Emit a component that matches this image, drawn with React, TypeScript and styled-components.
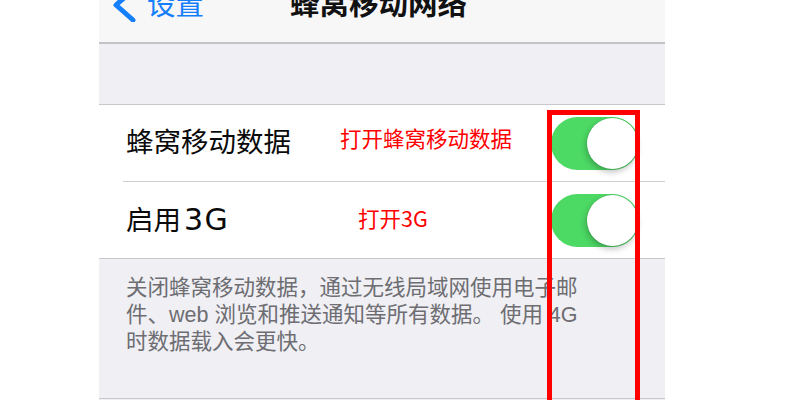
import React from 'react'
import styled, { createGlobalStyle } from 'styled-components'

const GlobalStyle = createGlobalStyle`
  html, body {
    margin: 0;
    padding: 0;
    background: #ffffff;
    overflow: hidden;
  }
  body {
    font-family: "Liberation Sans", "Noto Sans CJK SC", sans-serif;
  }
`

export default function App() {
  return (
    <>
      <GlobalStyle />
      <Page>
        <Screen>
          <NavBar>
            <BackButton>
              <Chevron viewBox="0 0 26 34">
                <path d="M22 2 L5 17 L22 32" />
              </Chevron>
              <span>设置</span>
            </BackButton>
            <NavTitle>蜂窝移动网络</NavTitle>
          </NavBar>
          <Spacer />
          <Group>
            <Row>
              <Label>蜂窝移动数据</Label>
              <Note $left={241} $shift={-5}>打开蜂窝移动数据</Note>
              <Toggle />
            </Row>
            <Row $last>
              <Label>
                启用<Latin>3G</Latin>
              </Label>
              <Note $left={259} $shift={-2}>打开3G</Note>
              <Toggle />
            </Row>
          </Group>
          <Footer>
            <FooterLine>关闭蜂窝移动数据，通过无线局域网使用电子邮</FooterLine>
            <FooterLine>件、web 浏览和推送通知等所有数据。 使用 4G</FooterLine>
            <FooterLine>时数据载入会更快。</FooterLine>
          </Footer>
        </Screen>
        <Highlight />
      </Page>
    </>
  )
}

function Toggle() {
  return (
    <Track>
      <Knob />
    </Track>
  )
}

const Page = styled.div`
  position: relative;
  width: 800px;
  height: 400px;
  overflow: hidden;
  display: flex;
  padding-left: 99px;
  box-sizing: border-box;
`

const Screen = styled.div`
  width: 566px;
  height: 400px;
  display: flex;
  flex-direction: column;
  background: #efeff4;
`

const NavBar = styled.div`
  height: 42px;
  flex-shrink: 0;
  background: #f7f7f8;
  border-bottom: 2px solid #c2c2c7;
  display: flex;
  align-items: flex-start;
  overflow: hidden;
`

const BackButton = styled.div`
  display: flex;
  align-items: center;
  margin-top: -16px;
  padding-left: 12px;
  color: #157efb;
  font-family: "Noto Sans CJK SC", sans-serif;
  font-size: 28.5px;
  line-height: 36px;

  span {
    margin-left: 10px;
  }
`

const Chevron = styled.svg`
  width: 26px;
  height: 34px;
  margin-top: 4px;

  path {
    fill: none;
    stroke: #157efb;
    stroke-width: 5;
    stroke-linecap: round;
    stroke-linejoin: round;
  }
`

const NavTitle = styled.div`
  margin-top: -18px;
  margin-left: 86px;
  font-family: "Noto Sans CJK SC", sans-serif;
  font-size: 29.5px;
  font-weight: 600;
  line-height: 38px;
  color: #111111;
`

const Spacer = styled.div`
  height: 60px;
  flex-shrink: 0;
  border-bottom: 1px solid #c8c7cc;
`

const Group = styled.div`
  background: #ffffff;
  border-bottom: 1px solid #c8c7cc;
  padding-left: 24px;
`

const Row = styled.div<{ $last?: boolean }>`
  position: relative;
  height: 76px;
  display: flex;
  align-items: center;
  padding-right: 26px;
  border-bottom: ${(p) => (p.$last ? 'none' : '1px solid #d0d0d4')};
`

const Label = styled.div`
  flex: 1;
  padding-left: 3px;
  font-size: 27.5px;
  line-height: 34px;
  color: #0a0a0a;
`

const Latin = styled.span`
  font-family: "DejaVu Sans", sans-serif;
  font-size: 30px;
  letter-spacing: 1.5px;
  margin-left: 3px;
`

const Note = styled.div<{ $left: number; $shift: number }>`
  position: absolute;
  left: ${(p) => p.$left - 24}px;
  top: 50%;
  transform: translateY(calc(-50% + ${(p) => p.$shift}px));
  font-family: "Noto Sans CJK SC", sans-serif;
  font-size: 21.5px;
  line-height: 28px;
  color: #ff0000;
`

const Track = styled.div`
  width: 88px;
  height: 53px;
  border-radius: 27px;
  background: #4cd964;
  position: relative;
  flex-shrink: 0;
`

const Knob = styled.div`
  position: absolute;
  right: 1px;
  top: 1px;
  width: 51px;
  height: 51px;
  border-radius: 50%;
  background: #ffffff;
  box-shadow: -1px 3px 6px rgba(0, 0, 0, 0.25), 0 0 0 0.5px rgba(0, 0, 0, 0.1);
`

const Footer = styled.div`
  height: 140px;
  flex-shrink: 0;
  border-bottom: 1px solid #c8c7cc;
  padding: 16px 0 0 27px;
  box-sizing: border-box;
`

const FooterLine = styled.div`
  font-size: 21.5px;
  line-height: 27px;
  color: #6d6d72;
  white-space: nowrap;
`

const Highlight = styled.div`
  position: absolute;
  left: 547px;
  top: 110px;
  width: 93px;
  height: 320px;
  border: 5px solid #ff0000;
  box-sizing: border-box;
  pointer-events: none;
`
